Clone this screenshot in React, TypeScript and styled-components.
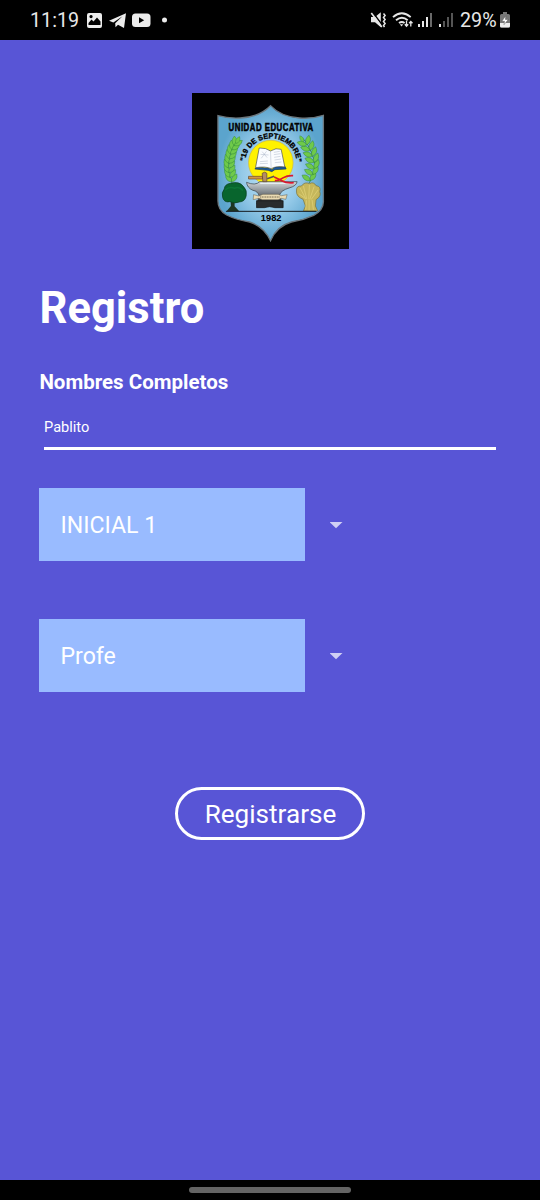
import React from 'react';
import styled, { createGlobalStyle } from 'styled-components';

const GlobalStyle = createGlobalStyle`
  *, *::before, *::after { box-sizing: border-box; }
  body { margin: 0; background: #5855d6; }
`;

const Screen = styled.div`
  display: flex;
  flex-direction: column;
  width: 540px;
  height: 1200px;
  background: #5855d6;
  color: #fff;
  font-family: Roboto, "Liberation Sans", sans-serif;
`;

const StatusBar = styled.header`
  display: flex;
  justify-content: space-between;
  align-items: center;
  flex: none;
  height: 40px;
  padding: 0 29px 0 30px;
  background: #000;
  color: #e8e8e8;
`;

const StatusGroup = styled.div`
  display: flex;
  align-items: center;
  height: 40px;
  svg { display: block; flex: none; }
`;

const StatusText = styled.span<{ $width: number }>`
  width: ${(p) => p.$width}px;
  padding-top: 1px;
  font-size: 19.7px;
  line-height: 40px;
  white-space: nowrap;
`;

const Content = styled.main`
  display: flex;
  flex-direction: column;
  flex: 1;
  padding: 53px 39px 0;
`;

const LogoFrame = styled.div`
  align-self: center;
  width: 157px;
  height: 156px;
  svg { display: block; }
`;

const Title = styled.h1`
  margin: 33px 0 0 0.6px;
  font-size: 43.5px;
  line-height: 54px;
  font-weight: 700;
`;

const Label = styled.label`
  margin: 33px 0 0 0.4px;
  font-size: 20.5px;
  line-height: 26px;
  font-weight: 700;
`;

const NameInput = styled.input`
  width: 452px;
  height: 39px;
  margin: 16px 0 0 5px;
  padding: 0 0 4px;
  border: 0;
  border-bottom: 3px solid #fff;
  border-radius: 0;
  outline: none;
  background: transparent;
  color: #fff;
  font-family: inherit;
  font-size: 14.6px;
`;

const SelectList = styled.div`
  display: flex;
  flex-direction: column;
  gap: 58px;
  margin-top: 38px;
`;

const SelectRow = styled.div`
  display: flex;
  align-items: center;
  gap: 25px;
  height: 73px;
  svg { display: block; }
`;

const SelectValue = styled.div`
  width: 265.5px;
  height: 73px;
  padding-left: 21.5px;
  background: #99bbff;
  font-size: 23.1px;
  line-height: 76.5px;
`;

const SubmitButton = styled.button`
  align-self: center;
  width: 190px;
  height: 53px;
  margin: 95px 0 0;
  padding: 0 0 0 1px;
  border: 3px solid #fff;
  border-radius: 27px;
  background: transparent;
  color: #fff;
  font-family: inherit;
  font-size: 26.1px;
  line-height: 48px;
`;

const NavBar = styled.footer`
  display: flex;
  justify-content: center;
  flex: none;
  height: 20px;
  padding-top: 7px;
  background: #000;
`;

const NavHandle = styled.div`
  width: 162px;
  height: 6px;
  border-radius: 3px;
  background: #646464;
`;

const NotificationIcons = () => (
  <svg width="90" height="24" viewBox="84 8 90 24" fill="#ececec">
    <path fillRule="evenodd" d="M89 13h11q2 0 2 2v11q0 2-2 2H89q-2 0-2-2V15q0-2 2-2zM88.5 25h12v-3.5l-3.5-4-3.5 4-2-2-3 3.5zM91 15a1.6 1.6 0 1 0 .1 0z" />
    <path d="M109 20.7 126 13.3 124 28 118 24.7 115.5 27.3 115.2 23.2 122.5 16.3 113.3 22.6z" />
    <rect x="132" y="13.5" width="18.5" height="13.5" rx="3.5" />
    <path d="M139 17.2v6l5.2-3z" fill="#000" />
    <circle cx="164.5" cy="20" r="2.5" />
  </svg>
);

const SignalIcons = () => (
  <svg width="91" height="24" viewBox="369 8 91 24" fill="none" stroke="#e6e6e6">
    <path d="M371 17h4l5.8-4.7v15l-5.8-5h-4z" fill="#e6e6e6" stroke="none" />
    <path d="M372.5 12 383 26" stroke="#000" strokeWidth="1.4" />
    <path d="M371.3 13 381.8 27" strokeWidth="1.6" />
    <path d="M383.5 13.5l1.6 2-1.6 2 1.6 2-1.6 2 1.6 2-1.6 2 1 1.5" strokeWidth="1.5" />
    <path d="M393 17.1q8.8-7.7 17.7 0M396 20.3q6-4.9 11.7 0M399 23.1q2.8-2.1 5.6 0" strokeWidth="1.9" />
    <path d="M399.8 24.3h3.4l-1.6 2.3z" fill="#e6e6e6" stroke="none" />
    <path d="M406.5 21v5M404.8 24.3 406.5 26.2 408.2 24.3M410.8 26.5v-5M409.1 23.3 410.8 21.4 412.5 23.3" strokeWidth="1.3" />
    <path d="M419 24v3M423 21v6M427 17v10" strokeWidth="2" />
    <path d="M431 13v14" stroke="#696969" strokeWidth="2" />
    <path d="M440 24v3" strokeWidth="2" />
    <path d="M444 21v6M448 17v10M452 13v14" stroke="#555" strokeWidth="2" />
  </svg>
);

const BatteryIcon = () => (
  <svg width="12" height="18" viewBox="0 0 12 18">
    <path d="M4 1h4v2h1.5q1.5 0 1.5 1.5V15q0 1.5-1.5 1.5h-7Q1 16.5 1 15V4.5Q1 3 2.5 3H4z" fill="#777" />
    <path d="M1 12h10v3q0 1.5-1.5 1.5h-7Q1 16.5 1 15z" fill="#ededed" />
    <path d="M6.8 4.8 2.8 10.3h2.7l-.5 3.4 4.3-5.2H6.4z" fill="#fff" stroke="#444" strokeWidth=".4" />
  </svg>
);

type LeafProps = { x: number; y: number; angle: number; size?: number };

const Leaf = ({ x, y, angle, size = 1 }: LeafProps) => (
  <path
    d="M0 0Q-12-10-2-24Q11-13 0 0z"
    fill="#6fca4a"
    stroke="#2b8236"
    strokeWidth="1"
    transform={`translate(${x} ${y}) rotate(${angle}) scale(${size})`}
  />
);

const leftStem = [
  [136, 282], [131, 268], [128, 254], [126, 240], [127, 226], [129, 212], [132, 198], [137, 185], [144, 173],
];
const rightStem = [
  [373, 278], [381, 260], [385, 242], [384, 223], [379, 205], [372, 187], [362, 171],
];

const SchoolCrest = () => (
  <svg width="157" height="156" viewBox="17 15 472 468" preserveAspectRatio="none" role="img">
    <defs>
      <radialGradient id="shieldBlue">
        <stop offset="0" stopColor="#c3e5f7" />
        <stop offset=".55" stopColor="#94c9e8" />
        <stop offset="1" stopColor="#5ba4cd" />
      </radialGradient>
      <linearGradient id="anvilMetal" x1="0" y1="0" x2="0" y2="1">
        <stop offset="0" stopColor="#d4d8da" />
        <stop offset=".45" stopColor="#858b90" />
        <stop offset="1" stopColor="#24282b" />
      </linearGradient>
      <path id="mottoArc" d="M177 224A77 73 0 0 1 331 224" />
    </defs>
    <rect x="17" y="15" width="473" height="468" fill="#000" />
    <path
      d="M95 83Q126 92 162 90Q219 87 253 53Q284 86 340 90Q379 93 412 82V337Q414 365 383 382Q350 397 316 402Q272 414 253 458Q233 415 190 402Q151 396 121 381Q94 366 95 337z"
      fill="url(#shieldBlue)" stroke="#6d777d" strokeWidth="4"
    />
    <circle cx="254" cy="224" r="67" fill="#fff200" stroke="#d1b836" strokeWidth="2" />
    <text x="127" y="129" textLength="256" lengthAdjust="spacingAndGlyphs" letterSpacing="2" fontFamily="Liberation Sans, sans-serif" fontWeight="700" fontSize="31" stroke="#000" strokeWidth="1.6">UNIDAD EDUCATIVA</text>
    <text fontFamily="Liberation Sans, sans-serif" fontWeight="700" fontSize="22" stroke="#000" strokeWidth="1">
      <textPath href="#mottoArc" startOffset="4" textLength="230" lengthAdjust="spacingAndGlyphs">"19 DE SEPTIEMBRE"</textPath>
    </text>

    <path d="M138 287Q111 229 137 181Q146 164 160 147" fill="none" stroke="#257632" strokeWidth="2" />
    {leftStem.map(([x, y], i) => (
      <g key={i}>
        <Leaf x={x} y={y} angle={-34 + i * 5} size={1.2} />
        <Leaf x={x} y={y} angle={38 + i * 3} size={1.2} />
      </g>
    ))}
    <Leaf x={149} y={167} angle={32} size={1} />
    <path d="M369 285Q401 243 376 193Q365 164 346 146" fill="none" stroke="#257632" strokeWidth="2" />
    {rightStem.map(([x, y], i) => (
      <g key={i}>
        <Leaf x={x} y={y} angle={-52 - i * 3} size={1.25} />
        <Leaf x={x} y={y} angle={36 - i * 3} size={1.25} />
      </g>
    ))}
    <Leaf x={352} y={162} angle={-25} size={0.9} />

    <path d="M206 243 211 238 250 241 257 245 267 237 297 236 300 243 266 245 257 251 246 247z" fill="#19589d" stroke="#143963" strokeWidth="2" />
    <path d="M219 180Q240 179 253 189Q270 178 285 184L296 237Q271 233 255 242Q238 234 208 239z" fill="#fafcff" stroke="#454b54" strokeWidth="2" />
    <path d="M253 189 255 242M228 191l15 18M241 190l-16 21M223 199l24 2M221 221l24-2M221 227l24-1M263 193l18-3M263 200l20-3M264 208l19-3M265 216l20-3M266 224l20-2" fill="none" stroke="#9eabc0" strokeWidth="1.3" />

    <path d="M181 283Q207 294 221 281H333Q331 294 309 300Q285 307 280 321L289 348H212L219 324Q215 309 200 307Q183 300 181 283z" fill="url(#anvilMetal)" stroke="#353b3f" strokeWidth="2" />
    <path d="M222 286H323" stroke="#e5eef1" strokeWidth="4" />
    <path d="M187 265H229V273H187z" fill="#d29747" stroke="#684122" strokeWidth="2" />
    <path d="M228 256q8-7 14 0v25h-12z" fill="#b48c64" stroke="#574130" strokeWidth="2" />
    <path d="M243 272 264 265" stroke="#555" strokeWidth="5" />
    <path d="M264 267Q278 273 287 278Q302 287 323 284M266 278Q280 278 292 269Q303 262 321 263" fill="none" stroke="#d81931" strokeWidth="5" />
    <path d="M211 338H291V359H266Q250 353 235 359H211z" fill="#292c2e" stroke="#101112" strokeWidth="2" />
    <path d="M202 320 218 324 230 319H276L286 323 303 320 299 334 285 331 276 335H229L218 331 201 335z" fill="#eadab2" stroke="#5c5749" strokeWidth="1.5" />
    <path d="M222 327H280" stroke="#615741" strokeWidth="3" strokeDasharray="3 2" />

    <path d="M133 335H145V355L159 370H121L134 354z" fill="#1d3522" />
    <path d="M114 303Q115 289 132 286Q160 278 173 297Q183 307 180 323Q177 341 159 342Q145 348 131 341Q113 345 109 328Q105 314 114 303z" fill="#08652d" stroke="#073b1d" strokeWidth="2" />
    <path d="M117 306q12-12 28-5 13-7 25 6" fill="none" stroke="#0d7537" strokeWidth="5" />
    <path d="M351 334Q330 326 331 309Q330 293 346 294Q356 280 370 287Q383 280 390 293Q406 295 401 311Q407 324 390 335L388 354 395 369H352L358 354z" fill="#c5b75b" stroke="#7b7136" strokeWidth="2" />
    <path d="M342 300l17 32M352 294l10 39M370 290l-2 44M384 296l-13 38M396 306l-21 29M338 317l22 16M361 337l-2 28M369 335v32M378 336l4 29" fill="none" stroke="#dfcf75" strokeWidth="2.5" />
    <path d="M119 370H391" stroke="#14191c" strokeWidth="3" />
    <text x="224" y="398" textLength="62" lengthAdjust="spacingAndGlyphs" fontFamily="Liberation Sans, sans-serif" fontWeight="700" fontSize="26">1982</text>
  </svg>
);

const DropdownArrow = () => (
  <svg width="13" height="8" viewBox="0 0 13 8">
    <path d="M-.5 .9H12.5L6 7.3z" fill="#d0cff4" />
  </svg>
);

const SelectField = ({ value }: { value: string }) => (
  <SelectRow>
    <SelectValue>{value}</SelectValue>
    <DropdownArrow />
  </SelectRow>
);

export default function App() {
  return (
    <>
      <GlobalStyle />
      <Screen>
        <StatusBar>
          <StatusGroup>
            <StatusText $width={54}>11:19</StatusText>
            <NotificationIcons />
          </StatusGroup>
          <StatusGroup>
            <SignalIcons />
            <StatusText $width={39}>29%</StatusText>
            <BatteryIcon />
          </StatusGroup>
        </StatusBar>
        <Content>
          <LogoFrame><SchoolCrest /></LogoFrame>
          <Title>Registro</Title>
          <Label htmlFor="full-name">Nombres Completos</Label>
          <NameInput id="full-name" defaultValue="Pablito" />
          <SelectList>
            <SelectField value="INICIAL 1" />
            <SelectField value="Profe" />
          </SelectList>
          <SubmitButton type="button">Registrarse</SubmitButton>
        </Content>
        <NavBar><NavHandle /></NavBar>
      </Screen>
    </>
  );
}
